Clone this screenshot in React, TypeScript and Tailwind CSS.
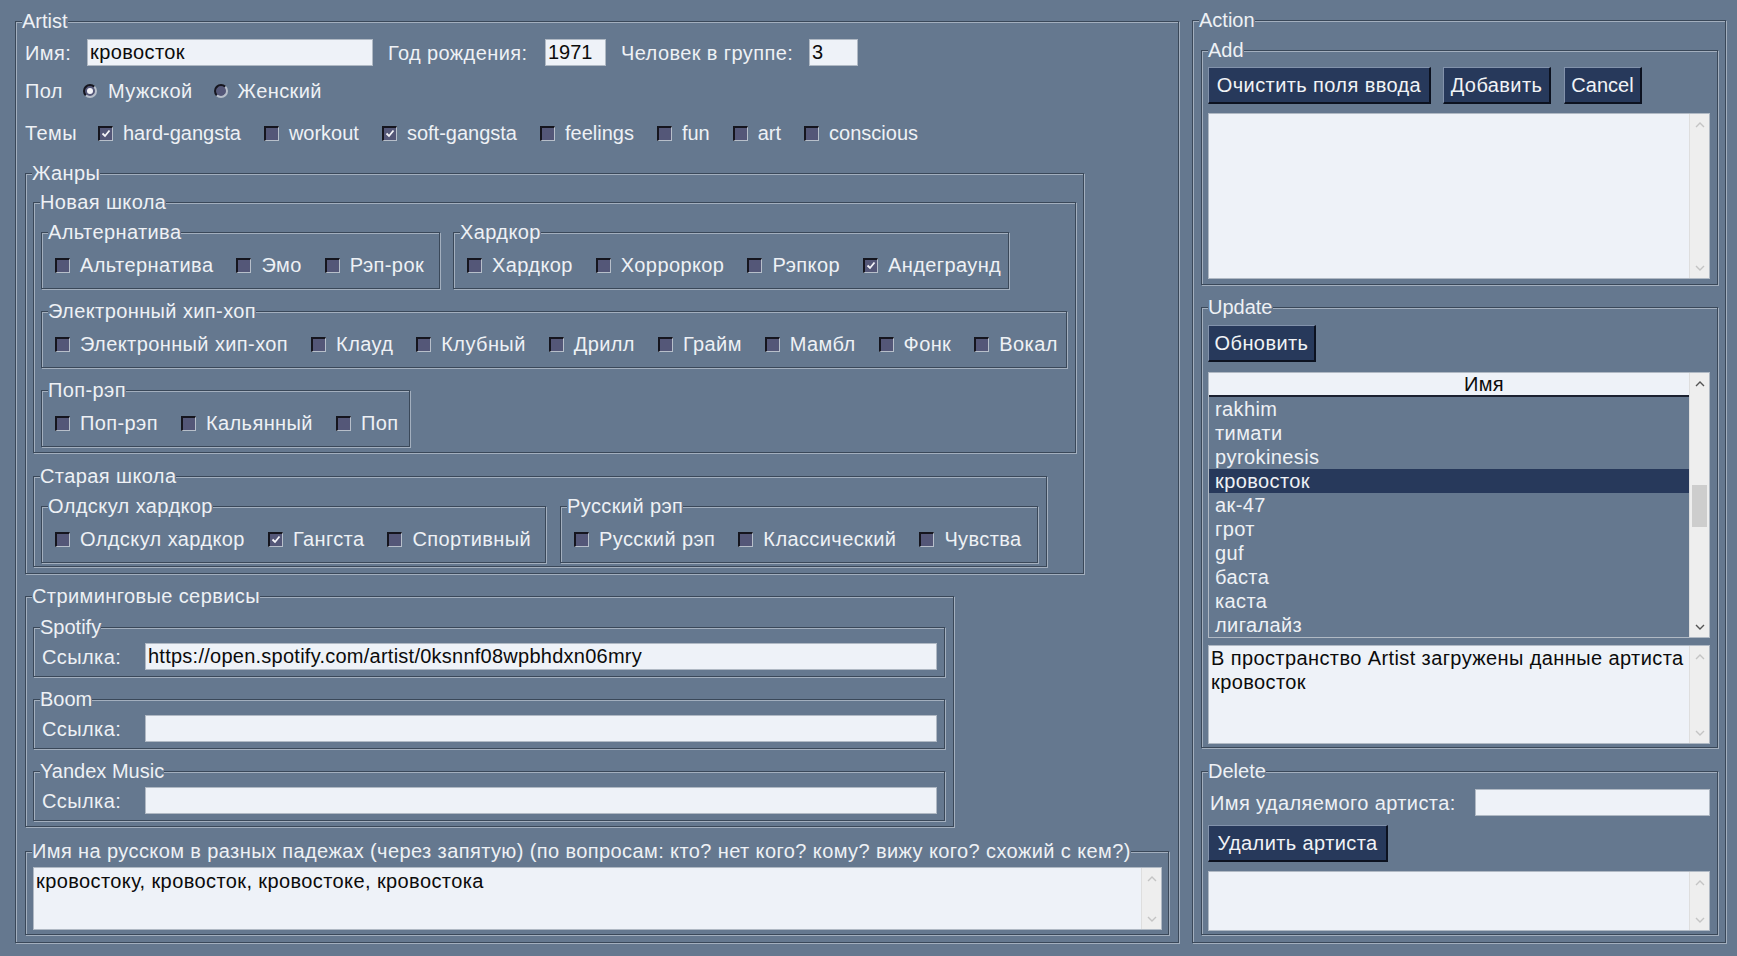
import React from "react";

type GP = { title: string; className?: string; body?: string; latin?: boolean; children?: React.ReactNode };

function Group({ title, className = "", body = "", latin, children }: GP) {
  return (
    <fieldset
      className={`min-w-0 border border-[#3a4859] shadow-[inset_1px_1px_0_#a3afbe,1px_1px_0_#a3afbe] ${className}`}
    >
      <legend
        className={`ml-[6px] whitespace-nowrap bg-[#65788f] text-[20px] leading-[22px] ${latin ? "tracking-normal" : ""}`}
      >
        {title}
      </legend>
      <div className={body}>{children}</div>
    </fieldset>
  );
}

function Box({ on }: { on?: boolean }) {
  return (
    <span className="flex h-[15px] w-[15px] shrink-0 items-center justify-center border-t-2 border-l-2 border-r border-b border-t-[#15151e] border-l-[#15151e] border-r-[#b7bfca] border-b-[#b7bfca] bg-[#545778]">
      {on && (
        <svg width="10" height="9" viewBox="0 0 10 9">
          <path d="M1.5 4.5 L4 7 L8.5 1.5" stroke="#f4f4f8" strokeWidth="1.8" fill="none" />
        </svg>
      )}
    </span>
  );
}

function Radio({ on, className = "" }: { on?: boolean; className?: string }) {
  return (
    <span
      className={`flex h-[14px] w-[14px] shrink-0 items-center justify-center rounded-full border-2 border-t-[#15151e] border-l-[#15151e] border-r-[#b7bfca] border-b-[#b7bfca] bg-[#545778] ${className}`}
    >
      {on && <span className="h-[6px] w-[6px] rounded-full bg-[#f4f4f8]" />}
    </span>
  );
}

function Check({ label, on, latin }: { label: string; on?: boolean; latin?: boolean }) {
  return (
    <span className={`flex items-center gap-[10px] whitespace-nowrap ${latin ? "tracking-normal" : ""}`}>
      <Box on={on} />
      <span>{label}</span>
    </span>
  );
}

type Item = [string, boolean?];

function Leaf({ title, className = "", items }: { title: string; className?: string; items: Item[] }) {
  return (
    <Group title={title} className={className} body="pl-[13px] pt-[10px] pb-[11px]">
      <div className="flex h-[24px] items-center gap-[23px]">
        {items.map(([l, on]) => (
          <Check key={l} label={l} on={on} />
        ))}
      </div>
    </Group>
  );
}

function Entry({ className = "", children }: { className?: string; children?: React.ReactNode }) {
  return (
    <div
      className={`h-[27px] shrink-0 overflow-hidden whitespace-nowrap border border-[#b0b9c4] bg-[#eef2f8] pl-[2px] leading-[25px] text-[#0b0b0b] ${className}`}
    >
      {children}
    </div>
  );
}

function Chev({ up, color }: { up?: boolean; color: string }) {
  return (
    <svg width="10" height="6" viewBox="0 0 10 6">
      <path d={up ? "M1 5 L5 1 L9 5" : "M1 1 L5 5 L9 1"} fill="none" stroke={color} strokeWidth="1.4" />
    </svg>
  );
}

function VScroll({ dark, thumb }: { dark?: boolean; thumb?: boolean }) {
  const c = dark ? "#555555" : "#c4c4c4";
  return (
    <div className="flex w-[20px] shrink-0 flex-col border-l border-[#dedede] bg-[#eeeeee]">
      <div className="flex h-[21px] shrink-0 items-center justify-center">
        <Chev up color={c} />
      </div>
      {thumb && <div className="mx-[2px] mt-[91px] h-[42px] shrink-0 bg-[#cdcdcd]" />}
      <div className="flex-1" />
      <div className="flex h-[21px] shrink-0 items-center justify-center">
        <Chev color={c} />
      </div>
    </div>
  );
}

function TextArea({ className = "", inner = "pt-[2px]", children }: { className?: string; inner?: string; children?: React.ReactNode }) {
  return (
    <div className={`flex border border-[#b0b9c4] bg-[#eef2f8] ${className}`}>
      <div className={`min-w-0 flex-1 overflow-hidden pl-[2px] text-[#0b0b0b] ${inner}`}>{children}</div>
      <VScroll />
    </div>
  );
}

function Btn({ className = "", children }: { className?: string; children: React.ReactNode }) {
  return (
    <div
      className={`flex h-[37px] shrink-0 items-center justify-center whitespace-nowrap border-t border-l border-r-2 border-b-2 border-t-[#8292ab] border-l-[#8292ab] border-r-[#0c1220] border-b-[#0c1220] bg-[#27395b] text-[#f1f3f6] ${className}`}
    >
      {children}
    </div>
  );
}

function Link({ title, className = "", value }: { title: string; className?: string; value?: string }) {
  return (
    <Group title={title} latin className={`w-[912px] ${className}`} body="pl-[8px] pt-[5px] pb-[6px]">
      <div className="flex h-[27px] items-center">
        <span className="w-[103px] shrink-0">Ссылка:</span>
        <Entry className="w-[792px] tracking-[0.25px]">{value}</Entry>
      </div>
    </Group>
  );
}

function Tree() {
  const rows = ["rakhim", "тимати", "pyrokinesis", "кровосток", "ак-47", "грот", "guf", "баста", "каста", "лигалайз"];
  return (
    <div className="mt-[10px] flex h-[266px] w-[502px] border border-[#b0b9c4]">
      <div className="flex min-w-0 flex-1 flex-col">
        <div className="flex h-[24px] shrink-0 items-center justify-center border-b-2 border-[#1b2130] bg-[#eef2f8] pl-[70px] text-[#0b0b0b]">
          Имя
        </div>
        {rows.map((r) => (
          <div
            key={r}
            className={`h-[24px] shrink-0 pl-[6px] leading-[24px] ${r === "кровосток" ? "bg-[#27395b]" : ""}`}
          >
            {r}
          </div>
        ))}
      </div>
      <VScroll dark thumb />
    </div>
  );
}

export default function App() {
  return (
    <div className="flex min-h-screen w-full items-start bg-[#65788f] pl-[15px] pt-[9px] text-[20px] leading-[24px] tracking-[0.4px] text-[#eef1f5] [font-family:'Liberation_Sans',Arial,sans-serif]">
      <Group title="Artist" latin className="mt-[1px] w-[1164px] shrink-0" body="pl-[9px] pb-[7px]">
        <div className="mt-[7px] flex h-[27px] items-center">
          <span className="w-[62px] shrink-0">Имя:</span>
          <Entry className="w-[286px]">кровосток</Entry>
          <span className="ml-[15px] w-[157px] shrink-0">Год рождения:</span>
          <Entry className="w-[61px] tracking-normal">1971</Entry>
          <span className="ml-[15px] w-[188px] shrink-0">Человек в группе:</span>
          <Entry className="w-[49px] tracking-normal">3</Entry>
        </div>
        <div className="mt-[13px] flex h-[24px] items-center">
          <span className="w-[58px] shrink-0">Пол</span>
          <Radio on />
          <span className="ml-[11px]">Мужской</span>
          <Radio className="ml-[21px]" />
          <span className="ml-[10px]">Женский</span>
        </div>
        <div className="mt-[18px] flex h-[24px] items-center">
          <span className="w-[73px] shrink-0">Темы</span>
          <div className="flex items-center gap-[23px]">
            <Check latin label="hard-gangsta" on />
            <Check latin label="workout" />
            <Check latin label="soft-gangsta" on />
            <Check latin label="feelings" />
            <Check latin label="fun" />
            <Check latin label="art" />
            <Check latin label="conscious" />
          </div>
        </div>

        <Group title="Жанры" className="mt-[17px] w-[1059px]" body="pl-[7px] pb-[6px]">
          <Group title="Новая школа" className="mt-[7px] w-[1043px]" body="pl-[7px] pb-[5px]">
            <div className="mt-[8px] flex">
              <Leaf
                title="Альтернатива"
                className="w-[399px]"
                items={[["Альтернатива"], ["Эмо"], ["Рэп-рок"]]}
              />
              <Leaf
                title="Хардкор"
                className="ml-[13px] w-[556px]"
                items={[["Хардкор"], ["Хорроркор"], ["Рэпкор"], ["Андеграунд", true]]}
              />
            </div>
            <Leaf
              title="Электронный хип-хоп"
              className="mt-[11px] w-[1026px]"
              items={[
                ["Электронный хип-хоп"],
                ["Клауд"],
                ["Клубный"],
                ["Дрилл"],
                ["Грайм"],
                ["Мамбл"],
                ["Фонк"],
                ["Вокал"],
              ]}
            />
            <Leaf
              title="Поп-рэп"
              className="mt-[11px] w-[369px]"
              items={[["Поп-рэп"], ["Кальянный"], ["Поп"]]}
            />
          </Group>
          <Group title="Старая школа" className="mt-[12px] w-[1014px]" body="pl-[7px] pb-[3px]">
            <div className="mt-[8px] flex">
              <Leaf
                title="Олдскул хардкор"
                className="w-[505px]"
                items={[["Олдскул хардкор"], ["Гангста", true], ["Спортивный"]]}
              />
              <Leaf
                title="Русский рэп"
                className="ml-[14px] w-[478px]"
                items={[["Русский рэп"], ["Классический"], ["Чувства"]]}
              />
            </div>
          </Group>
        </Group>

        <Group title="Стриминговые сервисы" className="mt-[11px] w-[929px]" body="pl-[7px] pb-[5px]">
          <Link title="Spotify" className="mt-[9px]" value="https://open.spotify.com/artist/0ksnnf08wpbhdxn06mry" />
          <Link title="Boom" className="mt-[11px]" />
          <Link title="Yandex Music" className="mt-[11px]" />
        </Group>

        <Group
          title="Имя на русском в разных падежах (через запятую) (по вопросам: кто? нет кого? кому? вижу кого? схожий с кем?)"
          className="mt-[13px] w-[1144px]"
          body="pl-[7px] pt-[5px] pb-[4px]"
        >
          <TextArea className="h-[63px] w-[1129px]" inner="pt-[1px]">
            кровостоку, кровосток, кровостоке, кровостока
          </TextArea>
        </Group>
      </Group>

      <Group title="Action" latin className="ml-[13px] w-[534px] shrink-0" body="pl-[8px] pb-[7px]">
        <Group title="Add" latin className="mt-[8px] w-[517px]" body="pl-[6px] pb-[5px]">
          <div className="mt-[6px] flex">
            <Btn className="w-[223px]">Очистить поля ввода</Btn>
            <Btn className="ml-[12px] w-[108px]">Добавить</Btn>
            <Btn className="ml-[13px] w-[78px] tracking-normal">Cancel</Btn>
          </div>
          <TextArea className="mt-[9px] h-[166px] w-[502px]" />
        </Group>

        <Group title="Update" latin className="mt-[11px] w-[517px]" body="pl-[6px] pb-[3px]">
          <Btn className="mt-[7px] w-[108px]">Обновить</Btn>
          <Tree />
          <TextArea className="mt-[7px] h-[99px] w-[502px]" inner="pt-0">
            <div className="whitespace-nowrap">В пространство Artist загружены данные артиста</div>
            <div>кровосток</div>
          </TextArea>
        </Group>

        <Group title="Delete" latin className="mt-[12px] w-[517px]" body="pl-[6px] pb-[3px]">
          <div className="mt-[7px] flex h-[27px] items-center">
            <span className="w-[267px] shrink-0 pl-[2px]">Имя удаляемого артиста:</span>
            <Entry className="w-[235px]" />
          </div>
          <Btn className="mt-[9px] w-[180px]">Удалить артиста</Btn>
          <TextArea className="mt-[9px] h-[60px] w-[502px]" />
        </Group>
      </Group>
    </div>
  );
}
